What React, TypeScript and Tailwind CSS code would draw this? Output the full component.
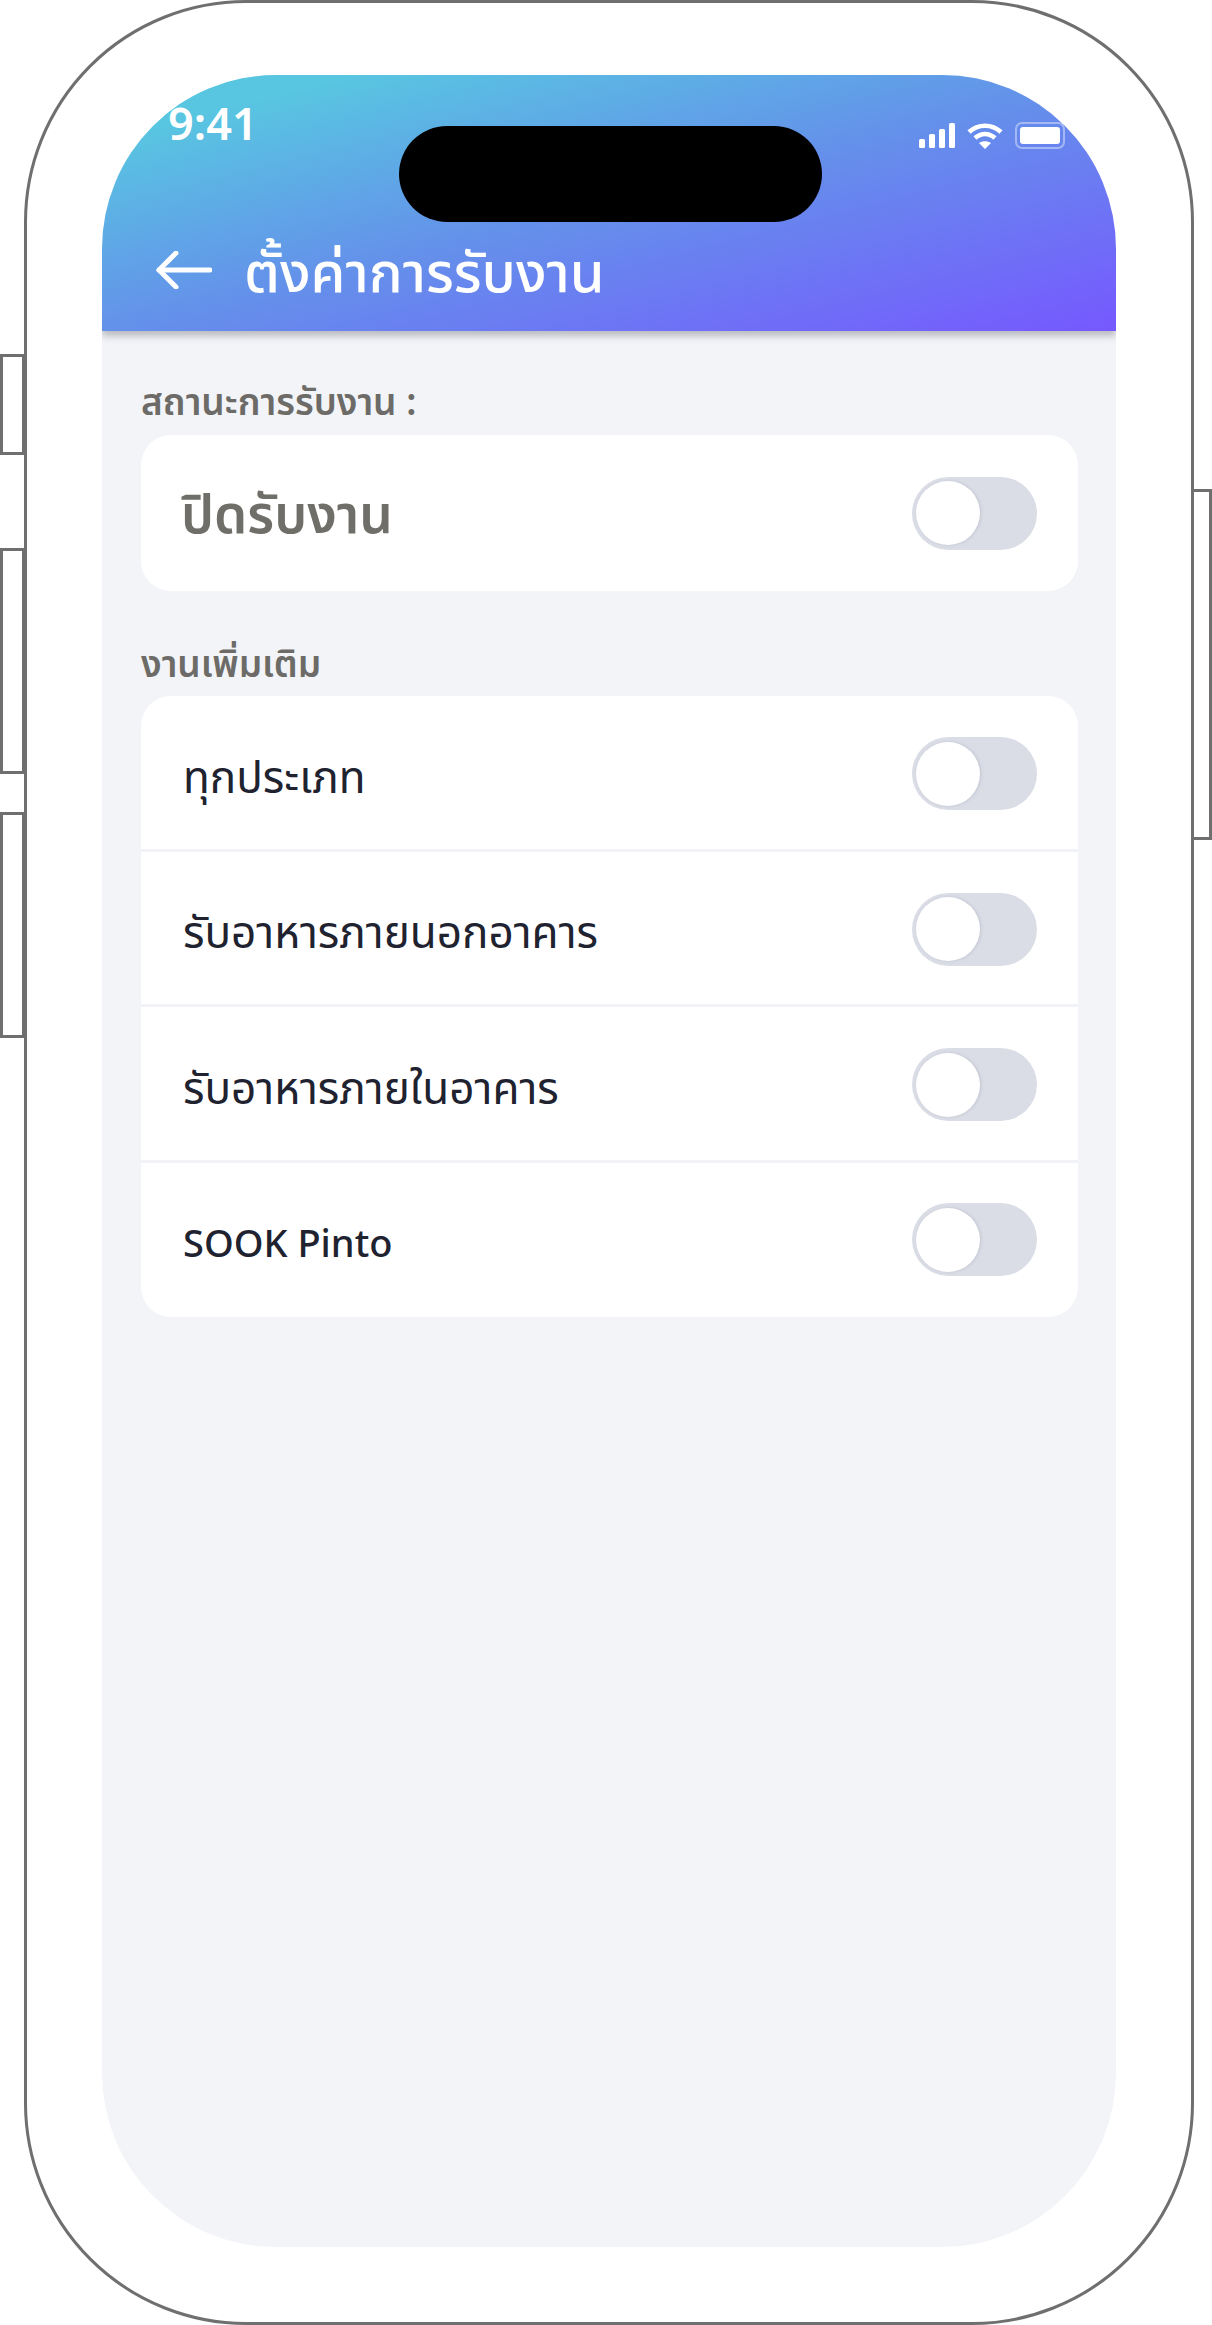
import { ReactNode } from 'react'

const fontStack = { fontFamily: '"Noto Sans", "Noto Sans Thai", "Open Sans", sans-serif' }

function Toggle() {
  return (
    <div className="flex h-[73px] w-[125px] shrink-0 items-center rounded-full bg-[#dadde6] pl-[4px]">
      <div className="h-[64px] w-[64px] rounded-full bg-white shadow-[1px_0_3px_rgba(120,125,145,0.25)]" />
    </div>
  )
}

function Row({ children, last }: { children: ReactNode; last?: boolean }) {
  return (
    <div
      className={`flex items-center justify-between pl-[42px] pr-[41px] ${
        last ? 'h-[154px]' : 'h-[155.5px] shadow-[inset_0_-3px_0_#f2f3f8]'
      }`}
    >
      {children}
    </div>
  )
}

function SideButton({ className }: { className: string }) {
  return <div className={`absolute border-[3px] border-[#6f6f6f] bg-white ${className}`} />
}

const extraJobs = [
  { label: 'ทุกประเภท', style: 'pt-[4px] text-[44px] font-[450]' },
  { label: 'รับอาหารภายนอกอาคาร', style: 'pt-[4px] text-[44px] font-[450]' },
  { label: 'รับอาหารภายในอาคาร', style: 'pt-[4px] text-[44px] font-[450]' },
  { label: 'SOOK Pinto', style: 'pt-[6px] text-[38px] font-medium' },
]

export default function App() {
  return (
    <div className="relative h-[2325px] w-[1212px] overflow-hidden bg-white" style={fontStack}>
      {/* hardware buttons */}
      <SideButton className="left-0 top-[354px] h-[101px] w-[25px]" />
      <SideButton className="left-0 top-[548px] h-[226px] w-[25px]" />
      <SideButton className="left-0 top-[812px] h-[226px] w-[25px]" />
      <SideButton className="left-[1190px] top-[489px] h-[351px] w-[22px]" />

      {/* phone body */}
      <div className="relative ml-[24px] h-[2325px] w-[1170px] rounded-[222px] border-[3px] border-[#6f6f6f] bg-white pl-[75px] pr-[75px] pt-[72px]">
        <div className="relative flex h-[2172px] flex-col overflow-hidden rounded-[174px] bg-[#f2f4f8]">
          {/* header */}
          <div className="flex h-[256px] shrink-0 flex-col bg-[linear-gradient(to_bottom_right,#58c6e1_12%,#6491ea_50%,#7658ff_100%)] shadow-[0_5px_7px_rgba(80,80,90,0.35)]">
            <div className="flex h-[72px] items-end justify-between pl-[66px] pr-[51px]">
              <span className="text-[45px] font-semibold leading-[48px] text-white">9:41</span>
              <div className="mb-[-2px] flex items-center gap-[12px]">
                <svg width="36" height="25" viewBox="0 0 36 25" fill="white">
                  <rect x="0" y="16" width="6" height="9" rx="1.5" />
                  <rect x="10" y="11" width="6" height="14" rx="1.5" />
                  <rect x="20" y="6" width="6" height="19" rx="1.5" />
                  <rect x="30" y="0" width="6" height="25" rx="1.5" />
                </svg>
                <svg width="36" height="27" viewBox="0 0 36 27" fill="none" stroke="white" strokeWidth="4.5">
                  <path d="M2 10 C11 1.5 25 1.5 34 10" />
                  <path d="M8 16 C14 10.5 22 10.5 28 16" />
                  <path d="M18 27 L12 21 C15.5 18.5 20.5 18.5 24 21 Z" fill="white" stroke="none" />
                </svg>
                <div className="rounded-[7px] border-[2px] border-white/40 p-[3px]">
                  <div className="h-[17px] w-[40px] rounded-[3px] bg-white" />
                </div>
              </div>
            </div>
            <div className="mt-[93px] flex items-center gap-[32px] pl-[54px]">
              <svg width="56" height="38" viewBox="0 0 56 38" fill="none" stroke="white" strokeWidth="5" strokeLinecap="round" strokeLinejoin="round">
                <path d="M54 19 H3" />
                <path d="M20 2 L3 19 L20 36" />
              </svg>
              <span className="text-[56px] font-medium leading-[60px] text-white">ตั้งค่าการรับงาน</span>
            </div>
          </div>

          {/* dynamic island */}
          <div className="absolute left-[297px] top-[51px] h-[96px] w-[423px] rounded-full bg-black" />

          {/* content */}
          <div className="flex flex-col pl-[39px] pr-[38px]">
            <p className="mt-[48px] h-[56px] text-[37px] font-semibold leading-[44px] text-[#6d6b67]">สถานะการรับงาน :</p>
            <div className="rounded-[30px] bg-white">
              <div className="flex h-[156px] items-center justify-between pl-[40px] pr-[41px]">
                <span className="text-[53px] font-semibold text-[#6f6e68]">ปิดรับงาน</span>
                <Toggle />
              </div>
            </div>

            <p className="mt-[50px] h-[55px] text-[37px] font-semibold leading-[44px] text-[#6d6b67]">งานเพิ่มเติม</p>
            <div className="rounded-[30px] bg-white">
              {extraJobs.map((job, i) => (
                <Row key={job.label} last={i === extraJobs.length - 1}>
                  <span className={`${job.style} text-[#20222f]`}>{job.label}</span>
                  <Toggle />
                </Row>
              ))}
            </div>
          </div>
        </div>
      </div>
    </div>
  )
}
